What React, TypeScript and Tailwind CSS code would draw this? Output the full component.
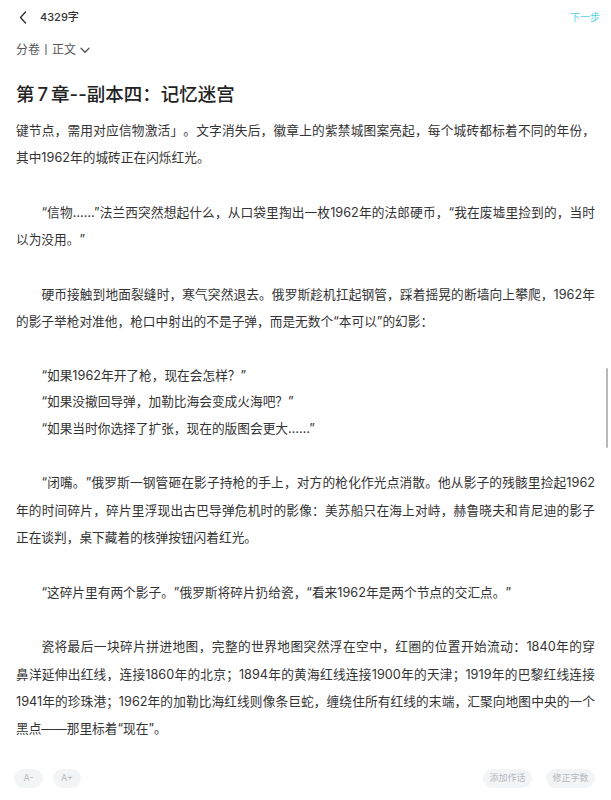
import React from "react"

const paragraphs: { lines: string[]; indent: boolean }[] = [
  {
    indent: false,
    lines: [
      "键节点，需用对应信物激活」。文字消失后，徽章上的紫禁城图案亮起，每个城砖都标着不同的年份，",
      "其中1962年的城砖正在闪烁红光。",
    ],
  },
  {
    indent: true,
    lines: [
      "“信物……”法兰西突然想起什么，从口袋里掏出一枚1962年的法郎硬币，“我在废墟里捡到的，当时",
      "以为没用。”",
    ],
  },
  {
    indent: true,
    lines: [
      "硬币接触到地面裂缝时，寒气突然退去。俄罗斯趁机扛起钢管，踩着摇晃的断墙向上攀爬，1962年",
      "的影子举枪对准他，枪口中射出的不是子弹，而是无数个“本可以”的幻影：",
    ],
  },
]

const quotes = [
  "“如果1962年开了枪，现在会怎样？”",
  "“如果没撤回导弹，加勒比海会变成火海吧？”",
  "“如果当时你选择了扩张，现在的版图会更大……”",
]

const rest: { lines: string[]; indent: boolean }[] = [
  {
    indent: true,
    lines: [
      "“闭嘴。”俄罗斯一钢管砸在影子持枪的手上，对方的枪化作光点消散。他从影子的残骸里捡起1962",
      "年的时间碎片，碎片里浮现出古巴导弹危机时的影像：美苏船只在海上对峙，赫鲁晓夫和肯尼迪的影子",
      "正在谈判，桌下藏着的核弹按钮闪着红光。",
    ],
  },
  {
    indent: true,
    lines: ["“这碎片里有两个影子。”俄罗斯将碎片扔给瓷，“看来1962年是两个节点的交汇点。”"],
  },
  {
    indent: true,
    lines: [
      "瓷将最后一块碎片拼进地图，完整的世界地图突然浮在空中，红圈的位置开始流动：1840年的穿",
      "鼻洋延伸出红线，连接1860年的北京；1894年的黄海红线连接1900年的天津；1919年的巴黎红线连接",
      "1941年的珍珠港；1962年的加勒比海红线则像条巨蛇，缠绕住所有红线的末端，汇聚向地图中央的一个",
      "黑点——那里标着“现在”。",
    ],
  },
]

function Paragraph({ lines, indent }: { lines: string[]; indent: boolean }) {
  return (
    <p className="mb-[27.3px]">
      {lines.map((line, i) => {
        const last = i === lines.length - 1
        return (
          <span
            key={i}
            className={
              "block " +
              (i === 0 && indent ? "indent-[2em] " : "") +
              (last ? "" : "whitespace-nowrap text-justify [text-align-last:justify]")
            }
          >
            {line}
          </span>
        )
      })}
    </p>
  )
}

export default function App() {
  return (
    <div className="relative flex h-[800px] flex-col overflow-hidden bg-white font-[Inter,'Noto_Sans_CJK_SC',sans-serif] text-[#333]">
      <header className="flex h-[34px] items-center justify-between pl-[19px] pr-[11px]">
        <div className="flex items-center">
          <svg width="8" height="13" viewBox="0 0 8 13" fill="none">
            <path d="M6.5 1 L1.5 6.5 L6.5 12" stroke="#333" strokeWidth="1.4" strokeLinecap="round" strokeLinejoin="round" />
          </svg>
          <span className="ml-[13px] text-[11px] font-medium text-[#333]">4329字</span>
        </div>
        <button className="text-[10px] text-[#55d3e3]">下一步</button>
      </header>

      <main className="flex-1 overflow-hidden px-4">
        <div className="flex h-[32px] items-center text-[12px] text-[#555]">
          <span>分卷丨正文</span>
          <svg className="ml-[4px]" width="10" height="7" viewBox="0 0 10 7" fill="none">
            <path d="M1 1.2 L5 5.2 L9 1.2" stroke="#555" strokeWidth="1.3" strokeLinecap="round" strokeLinejoin="round" />
          </svg>
        </div>

        <h1 className="mt-[14px] text-[18.5px] leading-[28px] font-medium text-[#222]">
          第<span className="mx-[3px]">7</span>章--副本四：记忆迷宫
        </h1>

        <div className="mt-[9px] text-[12.7px] leading-[27.3px] [text-spacing-trim:space-all]">
          {paragraphs.map((p, i) => (
            <Paragraph key={i} {...p} />
          ))}
          <div className="mb-[27.3px] pl-[2em] leading-[26.5px]">
            {quotes.map((q, i) => (
              <p key={i}>{q}</p>
            ))}
          </div>
          {rest.map((p, i) => (
            <Paragraph key={i} {...p} />
          ))}
        </div>
      </main>

      <footer className="flex h-[44px] items-center justify-between px-[14px] text-[9px] text-[#b5b9be]">
        <div className="flex gap-[10px]">
          <button className="flex h-[19px] w-[29px] items-center justify-center rounded-full bg-[#f2f4f6]">A-</button>
          <button className="flex h-[19px] w-[28px] items-center justify-center rounded-full bg-[#f2f4f6]">A+</button>
        </div>
        <div className="flex gap-[14px] pr-[2px]">
          <button className="flex h-[19px] w-[49px] items-center justify-center rounded-full bg-[#f2f4f6]">添加作话</button>
          <button className="flex h-[19px] w-[49px] items-center justify-center rounded-full bg-[#f2f4f6]">修正字数</button>
        </div>
      </footer>

      <div className="absolute top-[368px] right-[3px] h-[80px] w-[2.5px] rounded-full bg-[#b9b9b9]" />
    </div>
  )
}
